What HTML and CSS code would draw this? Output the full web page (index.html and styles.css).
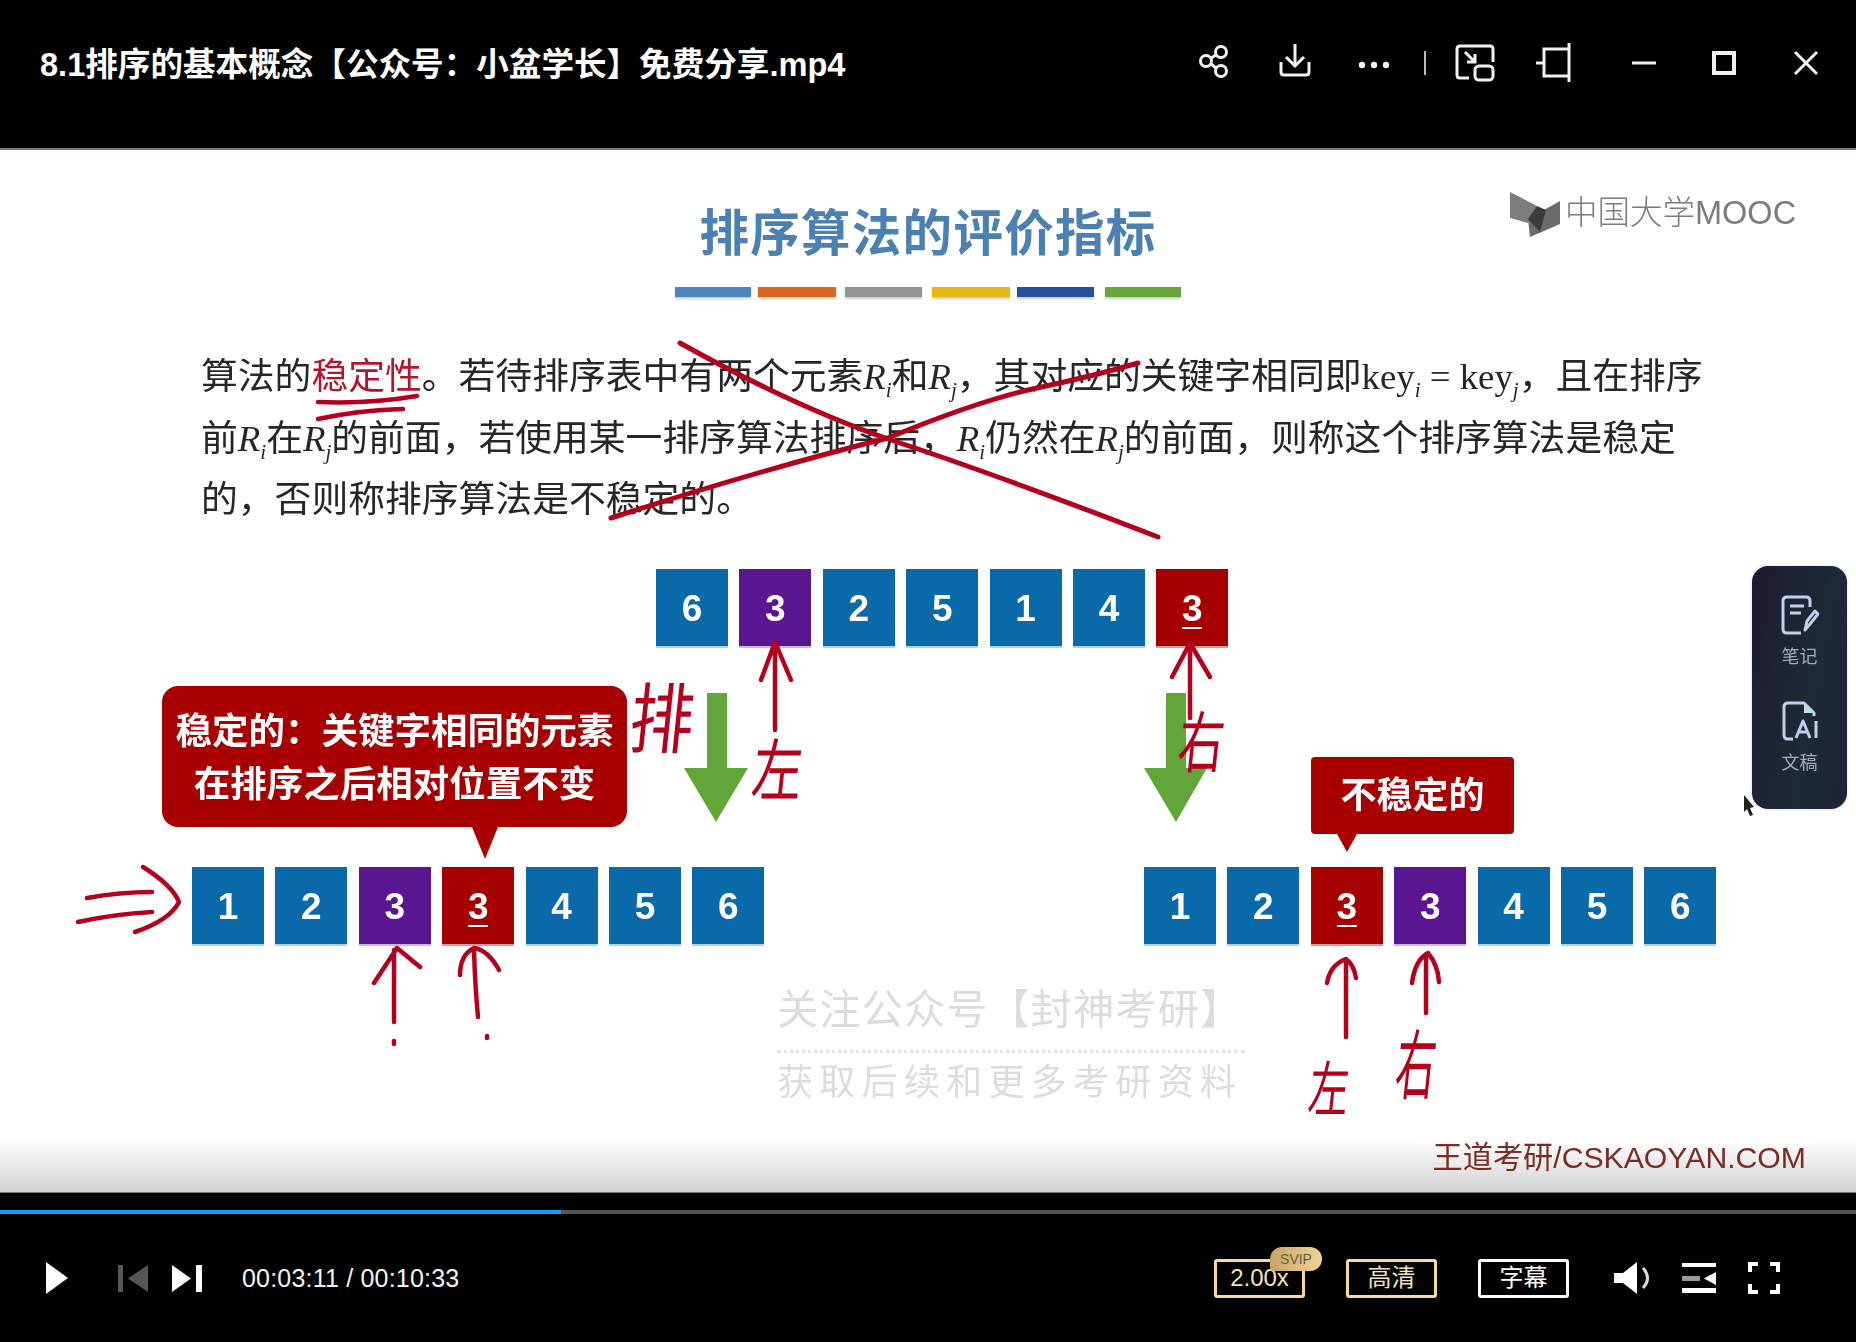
FILE: index.html
```html
<!DOCTYPE html>
<html lang="zh-CN">
  <head>
    <meta charset="UTF-8" />
    <title>8.1排序的基本概念</title>
    <link rel="stylesheet" href="styles.css">
  </head>
  <body>
    <header class="topbar">
      <div class="file-title">8.1排序的基本概念【公众号：小盆学长】免费分享.mp4</div>
      <div class="top-icons">
        <svg viewBox="0 0 40 40" class="ico"><circle cx="13" cy="20" r="5.5"/><circle cx="28" cy="11" r="5.5"/><circle cx="28" cy="30" r="5.5"/><path d="M18 17l5-3M18 23l5 4"/></svg>
        <svg viewBox="0 0 40 40" class="ico"><path d="M20 3v22M11 16l9 9 9-9M6 21v10q0 3 3 3h22q3 0 3-3V21"/></svg>
        <svg viewBox="0 0 40 40" class="ico fill"><circle cx="9" cy="24" r="3.2"/><circle cx="21" cy="24" r="3.2"/><circle cx="33" cy="24" r="3.2"/></svg>
        <svg viewBox="0 0 40 40" class="ico thin"><path d="M20 10v24"/></svg>
        <svg viewBox="0 0 40 40" class="ico"><path d="M38 21V8q0-3-3-3H5Q2 5 2 8v26q0 3 3 3h9"/><rect x="20" y="25" width="18" height="14" rx="4"/><path d="M10 11l10 10M20 13v8h-8"/></svg>
        <svg viewBox="0 0 40 40" class="ico"><path d="M34 2v39M34 8H9v27h25M1 22h8"/></svg>
        <svg viewBox="0 0 40 40" class="ico"><path d="M8 22h24"/></svg>
        <svg viewBox="0 0 40 40" class="ico heavy"><rect x="10" y="12" width="20" height="20"/></svg>
        <svg viewBox="0 0 40 40" class="ico"><path d="M9 11l22 22M31 11L9 33"/></svg>
      </div>
    </header>

    <main class="slide">
      <h1 class="slide-title">排序算法的评价指标</h1>
      <div class="color-rule">
        <span class="c-blue"></span><span class="c-orange"></span><span class="c-grey"></span><span class="c-yellow"></span><span class="c-navy"></span><span class="c-green"></span>
      </div>
      <div class="para">
        <p>算法的<em>稳定性</em>。若待排序表中有两个元素<i>R<sub>i</sub></i>和<i>R<sub>j</sub></i>，其对应的关键字相同即<span class="key">key<sub>i</sub> = key<sub>j</sub></span>，且在排序</p>
        <p>前<i>R<sub>i</sub></i>在<i>R<sub>j</sub></i>的前面，若使用某一排序算法排序后，<i>R<sub>i</sub></i>仍然在<i>R<sub>j</sub></i>的前面，则称这个排序算法是稳定</p>
        <p>的，否则称排序算法是不稳定的。</p>
      </div>

      <div class="logo">
        <svg viewBox="0 0 51 45" class="logo-mark"><path fill="#7d7d7d" d="M0 0l27 14-9 17-18-5z"/><path fill="#6a6a6a" d="M50 9v23L20 45l-2-18z"/><path fill="#3c3c3c" d="M27 14l9 4-6 22-12-13z"/></svg>
        <span>中国大学MOOC</span>
      </div>

      <div class="tiles row-top">
        <b>6</b><b class="purple">3</b><b>2</b><b>5</b><b>1</b><b>4</b><b class="red">3</b>
      </div>
      <div class="tiles row-left">
        <b>1</b><b>2</b><b class="purple">3</b><b class="red">3</b><b>4</b><b>5</b><b>6</b>
      </div>
      <div class="tiles row-right">
        <b>1</b><b>2</b><b class="red">3</b><b class="purple">3</b><b>4</b><b>5</b><b>6</b>
      </div>

      <div class="callout stable">稳定的：关键字相同的元素<br>在排序之后相对位置不变</div>
      <div class="callout unstable">不稳定的</div>

      <div class="watermark">
        <div class="wm-main">关注公众号【封神考研】</div>
        <div class="wm-line"></div>
        <div class="wm-sub">获取后续和更多考研资料</div>
      </div>
      <div class="site-mark">王道考研/CSKAOYAN.COM</div>

      <svg class="ink-layer" viewBox="0 150 1856 1042">
        <path fill="#62a63a" d="M707 693h20v75h21l-32 54-32-54h23z"/>
        <path fill="#62a63a" d="M1166 693h20v75h21l-31 54-32-54h22z"/>
        <g class="pen">
          <path class="slash" d="M680 343Q800 410 900 443T1158 537"/>
          <path class="slash" d="M611 518Q760 470 888 438 980 400 1037 388T1138 363"/>
          <path d="M318 402Q370 404 417 396M318 419Q360 410 403 409"/>
          <path d="M775 730V645M761 680L775 642 791 680"/>
          <path d="M1190 718V645M1172 677L1190 643 1210 677"/>
          <path d="M87 898Q120 892 152 892M78 922Q115 914 152 912M143 867Q172 885 179 902 170 920 135 932"/>
          <path d="M394 1022V950M374 983L397 948 420 967"/>
          <path d="M478 1017Q475 985 474 950M460 975Q460 955 474 948 488 950 499 970"/>
          <path d="M394 1041v3M487 1036v2"/>
          <path d="M1346 1037V961M1327 983Q1330 965 1346 959 1354 965 1356 978"/>
          <path d="M1426 1013V955M1412 983Q1415 960 1428 953 1438 965 1439 982"/>
        </g>
      </svg>
      <span class="ink ink-pai">排</span>
      <span class="ink ink-l1">左</span>
      <span class="ink ink-r1">右</span>
      <span class="ink ink-l2">左</span>
      <span class="ink ink-r2">右</span>

      <aside class="side-panel">
        <svg viewBox="0 0 38 40" class="side-ico"><path d="M29 12V6q0-4-4-4H6Q2 2 2 6v28q0 4 4 4h14M9 11h14M9 18h11"/><path d="M24 35l2-9 8-10 3 3-8 10z"/></svg>
        <span>笔记</span>
        <svg viewBox="0 0 38 40" class="side-ico second"><path d="M12 38H7q-4 0-4-4V6q0-4 4-4h16l10 10v3"/><path class="tip" d="M23 2v10h10z"/><path d="M15 37l7-17 7 17M18 31h8M35 20v17"/></svg>
        <span>文稿</span>
      </aside>

      <svg class="pointer" viewBox="0 0 12 22"><path d="M1 0l10 12-4 1 3 7-3 1-3-7-3 3z"/></svg>
    </main>

    <footer class="controls">
      <div class="progress"><div class="progress-fill"></div></div>
      <div class="ctrl-row">
        <div class="ctrl-left">
          <svg viewBox="0 0 22 32" class="i-play"><path d="M0 0l22 16L0 32z"/></svg>
          <svg viewBox="0 0 30 27" class="i-skip dim"><path d="M0 0h5v27H0zM30 0v27L10 13.500z"/></svg>
          <svg viewBox="0 0 30 27" class="i-skip"><path d="M0 0l19 13.500L0 27zM24 0h6v27h-6z"/></svg>
          <span class="time">00:03:11 / 00:10:33</span>
        </div>
        <div class="ctrl-right">
          <div class="pill gold speed">2.00x<span class="svip">SVIP</span></div>
          <div class="pill gold">高清</div>
          <div class="pill">字幕</div>
          <svg viewBox="0 0 38 32" class="i-vol"><path d="M0 11h9L23 0v32L9 21H0z"/><path class="arc" d="M29 6q9 10 0 20"/></svg>
          <svg viewBox="0 0 34 30" class="i-list"><path d="M0 0h34v4H0zM0 25h34v5H0z"/><path fill="#9a9a9a" d="M0 13h18v5H0z"/><path d="M34 9v13l-12-6.500z"/></svg>
          <svg viewBox="0 0 32 32" class="i-full"><path d="M10 2H2v8M22 2h8v8M10 30H2v-8M22 30h8v-8"/></svg>
        </div>
      </div>
    </footer>
  </body>
</html>
```

FILE: styles.css
```css
* {
  box-sizing: border-box;
}
body {
  margin: 0;
  height: 100vh;
  display: flex;
  flex-direction: column;
  overflow: hidden;
  background: #000;
  font-family: "Liberation Sans", "Noto Sans CJK SC", sans-serif;
}

/* top bar */
.topbar {
  height: 150px;
  flex: none;
  display: flex;
  justify-content: space-between;
  align-items: center;
  padding: 0 30px 26px 40px;
  background: #000;
  border-bottom: 2px solid #6c8268;
}
.file-title {
  color: #fff;
  font-size: 32.6px;
  font-weight: 700;
  white-space: nowrap;
}
.top-icons {
  display: grid;
  grid-template-columns: 82px 78px 52px 50px 80px 89px 80px 82px 40px;
}
.ico {
  width: 40px;
  height: 40px;
  overflow: visible;
  fill: none;
  stroke: #f2f2f2;
  stroke-width: 3;
}
.ico.fill {
  fill: #f2f2f2;
  stroke: none;
}
.ico.thin {
  stroke: #bbb;
  stroke-width: 2;
}
.ico.heavy {
  stroke-width: 4;
}

/* slide */
.slide {
  flex: 1;
  position: relative;
  overflow: hidden;
  background: linear-gradient(to bottom, #fff 0, #fff 95%, #d2d2d2 100%);
  border-bottom: 1px solid #6e7a66;
  filter: blur(0.6px);
}
.slide-title {
  margin: 54px 0 0;
  height: 60px;
  line-height: 60px;
  text-align: center;
  font-size: 49.500px;
  font-weight: 700;
  letter-spacing: 1.300px;
  color: #4b80b2;
}
.color-rule {
  display: flex;
  margin: 23px 0 0 675px;
}
.color-rule span {
  height: 10px;
  box-shadow: 0 2px 2px #ccc;
}
.c-blue { width: 76px; background: #4c88bb; }
.c-orange { width: 78px; margin-left: 7px; background: #d9661f; }
.c-grey { width: 77px; margin-left: 9px; background: #949494; }
.c-yellow { width: 78px; margin-left: 10px; background: #e6b712; }
.c-navy { width: 77px; margin-left: 7px; background: #264f9e; }
.c-green { width: 76px; margin-left: 11px; background: #6aa53a; }

.para {
  margin-top: 49px;
  padding-left: 201px;
  color: #262626;
  font-size: 36.8px;
}
.para p {
  margin: 0;
  height: 61.500px;
  line-height: 61.500px;
  white-space: nowrap;
}
.para em {
  font-style: normal;
  color: #b3162c;
}
.para i,
.key {
  font-family: "Liberation Serif", serif;
}
.para sub {
  font-size: 21px;
  line-height: 0;
  font-style: italic;
}

.logo {
  position: absolute;
  left: 1510px;
  top: 42px;
  display: flex;
  gap: 4px;
  font-size: 32.500px;
  font-weight: 300;
  line-height: 42px;
  color: #7c7c7c;
}
.logo-mark {
  width: 51px;
  height: 45px;
}

/* number tiles */
.tiles {
  position: absolute;
  display: flex;
  gap: 11.400px;
}
.tiles b {
  position: relative;
  width: 72px;
  height: 79px;
  line-height: 79px;
  text-align: center;
  font-size: 37px;
  color: #fff;
  background: #0a69a8;
  border-bottom: 2px solid #a9d3e8;
}
.tiles b.purple {
  background: #5a1690;
  border-bottom-color: #cdb6df;
}
.tiles b.red {
  background: #a60000;
  border-bottom-color: #d99;
}
.tiles b.red::after {
  content: "";
  position: absolute;
  left: 26px;
  bottom: 17px;
  width: 20px;
  height: 2px;
  background: #fff;
}
.row-top { left: 656px; top: 419px; }
.row-left { left: 192px; top: 717px; }
.row-right { left: 1144px; top: 717px; }

/* callouts */
.callout {
  position: absolute;
  background: #a80000;
  color: #fff;
  font-weight: 700;
  text-align: center;
  font-size: 36.500px;
}
.callout::after {
  content: "";
  position: absolute;
  top: 100%;
  width: 0;
  height: 0;
  border-style: solid;
  border-color: #a80000 transparent transparent;
}
.stable {
  left: 162px;
  top: 536px;
  width: 465px;
  height: 141px;
  padding-top: 19px;
  line-height: 53px;
  border-radius: 16px;
}
.stable::after {
  left: 310px;
  border-width: 32px 13px 0;
}
.unstable {
  left: 1311px;
  top: 607px;
  width: 203px;
  height: 77px;
  line-height: 77px;
  border-radius: 4px;
  font-size: 36px;
}
.unstable::after {
  left: 26px;
  border-width: 18px 10px 0;
}

/* watermark and footer mark */
.watermark {
  position: absolute;
  left: 777px;
  top: 837px;
  width: 468px;
  color: #dcdcdc;
}
.wm-main {
  font-size: 41.300px;
  line-height: 46px;
  letter-spacing: 1px;
  white-space: nowrap;
}
.wm-line {
  margin-top: 17px;
  border-top: 3px dotted #e2e2e2;
}
.wm-sub {
  margin-top: 11px;
  font-size: 36px;
  line-height: 38px;
  letter-spacing: 6.300px;
  white-space: nowrap;
}
.site-mark {
  position: absolute;
  right: 50px;
  bottom: 16px;
  font-size: 30.200px;
  line-height: 36px;
  color: #7d2a20;
  white-space: nowrap;
}

/* handwritten ink */
.ink-layer {
  position: absolute;
  left: 0;
  top: 0;
  width: 1856px;
  height: 1042px;
  pointer-events: none;
}
.pen {
  fill: none;
  stroke: #b4001c;
  stroke-width: 4.500;
  stroke-linecap: round;
  stroke-linejoin: round;
}
.pen .slash {
  stroke-width: 5;
}
.ink {
  position: absolute;
  line-height: 1;
  color: #b4001c;
  transform-origin: top left;
}
.ink-pai { left: 634px; top: 532px; font-size: 64px; transform: skewX(-6deg) scaleY(1.2); }
.ink-l1 { left: 756px; top: 588px; font-size: 50px; transform: skewX(-6deg) scaleY(1.35); }
.ink-r1 { left: 1182px; top: 560px; font-size: 46px; transform: skewX(-6deg) scaleY(1.45); }
.ink-l2 { left: 1312px; top: 910px; font-size: 40px; transform: skewX(-6deg) scaleY(1.5); }
.ink-r2 { left: 1400px; top: 878px; font-size: 40px; transform: skewX(-6deg) scaleY(1.9); }

/* notes panel */
.side-panel {
  position: absolute;
  left: 1752px;
  top: 416px;
  width: 95px;
  height: 243px;
  padding-top: 29px;
  display: flex;
  flex-direction: column;
  align-items: center;
  border-radius: 16px;
  background: linear-gradient(100deg, #1e1a30 0%, #1d2a38 60%, #1b2434 100%);
  box-shadow: 0 0 3px #c9d2e6;
  color: #a9adb6;
  font-size: 18px;
  line-height: 22px;
}
.side-ico {
  width: 38px;
  height: 40px;
  margin-bottom: 11px;
  fill: none;
  stroke: #c3cfea;
  stroke-width: 3;
  stroke-linejoin: round;
}
.side-ico.second {
  margin-top: 33px;
}
.side-ico .tip {
  fill: #bcdbe8;
  stroke: none;
}
.pointer {
  position: absolute;
  left: 1743px;
  top: 645px;
  width: 12px;
  height: 22px;
  fill: #222;
}

/* player controls */
.controls {
  height: 149px;
  flex: none;
  padding-top: 17px;
  background: #000;
}
.progress {
  height: 4px;
  background: #555;
}
.progress-fill {
  width: 30.200%;
  height: 100%;
  background: #0ca2f2;
}
.ctrl-row {
  height: 128px;
  display: flex;
  justify-content: space-between;
  align-items: center;
  padding: 0 76px 0 46px;
}
.ctrl-left,
.ctrl-right {
  display: flex;
  align-items: center;
}
.i-play {
  width: 22px;
  height: 32px;
  margin-right: 50px;
  fill: #fff;
}
.i-skip {
  width: 30px;
  height: 27px;
  margin-right: 24px;
  fill: #fff;
}
.i-skip.dim {
  fill: #555;
}
.time {
  margin-left: 16px;
  color: #f4f4f4;
  font-size: 25px;
  letter-spacing: 0.200px;
}
.pill {
  position: relative;
  width: 91px;
  height: 39px;
  margin-right: 41px;
  border: 3px solid #fff;
  border-radius: 3px;
  color: #fff;
  font-size: 24px;
  line-height: 32px;
  text-align: center;
}
.pill.gold {
  border-color: #f8d99f;
  color: #f8e2b8;
}
.pill:nth-child(3) {
  margin-right: 45px;
}
.svip {
  position: absolute;
  right: -20px;
  top: -15px;
  width: 52px;
  height: 24px;
  border-radius: 12px 12px 12px 4px;
  background: linear-gradient(90deg, #c9a566, #f0d494);
  color: #6e5a36;
  font-size: 14px;
  line-height: 24px;
}
.i-vol {
  width: 38px;
  height: 32px;
  margin-right: 30px;
  fill: #fff;
}
.i-vol .arc {
  fill: none;
  stroke: #ddd;
  stroke-width: 3;
}
.i-list {
  width: 34px;
  height: 30px;
  margin-right: 32px;
  fill: #fff;
}
.i-full {
  width: 32px;
  height: 32px;
  fill: none;
  stroke: #fff;
  stroke-width: 4;
}
```
